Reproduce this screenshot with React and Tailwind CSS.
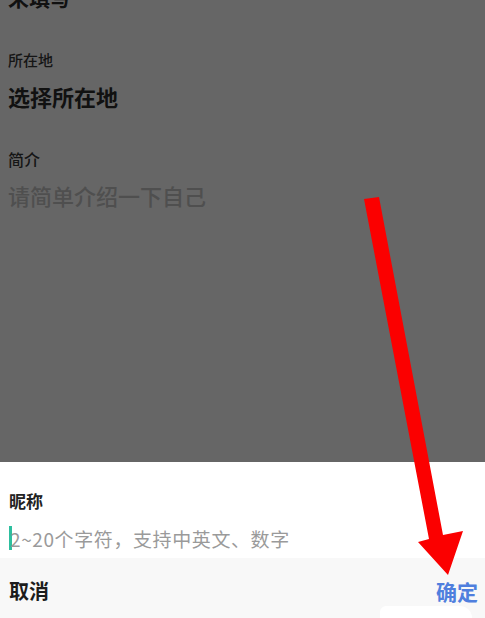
const font = { fontFamily: '"Noto Sans CJK SC", "Noto Sans", sans-serif' };

// Red pointer drawn over the dialog
const Arrow = () => (
  <svg className="pointer-events-none absolute left-0 top-0" width="485" height="618" viewBox="0 0 485 618">
    <polygon
      points="364,199 379,197 443,535 463,531 448,575 418,542 429,539"
      fill="#fb0000"
    />
  </svg>
);

export default function App() {
  return (
    <div className="relative h-[618px] w-[485px] overflow-hidden bg-white" style={font}>
      {/* Dimmed profile form behind the sheet */}
      <div className="flex h-[462px] flex-col bg-[#666666] pl-2">
        <p className="mt-[-13px] text-[21px] font-bold leading-none text-[#111]">未填写</p>
        <p className="mt-[44px] text-[15px] font-medium leading-none text-[#151515]">所在地</p>
        <p className="mt-[18px] text-[22px] font-bold leading-none text-[#111]">选择所在地</p>
        <p className="mt-[44px] text-[16px] font-medium leading-none text-[#151515]">简介</p>
        <p className="mt-[17px] text-[22px] font-medium leading-none text-[#4f4f4f]">请简单介绍一下自己</p>
      </div>

      {/* Nickname editor sheet */}
      <div className="flex h-[96px] flex-col bg-white pl-[9px] pt-[30px]">
        <p className="text-[17px] font-bold leading-none text-[#222]">昵称</p>
        <div className="mt-[17px] flex items-center">
          <span className="mr-[-2px] h-[24px] w-[3px] bg-[#2dbf9f]" />
          <span className="text-[19px] leading-none tracking-[0.6px] text-[#9a9a9a]">2~20个字符，支持中英文、数字</span>
        </div>
      </div>
      <div className="flex h-[60px] items-start justify-between bg-[#f8f8f8] pl-[9px] pr-[7px] pt-[23px]">
        <span className="text-[20px] font-bold leading-none text-[#1c1c1c]">取消</span>
        <span className="relative z-10 text-[21px] font-bold leading-none text-[#4f7fde]">确定</span>
      </div>
      <div className="absolute bottom-0 left-[380px] h-[12px] w-[92px] rounded-tl-md rounded-tr-xl bg-white" />

      <Arrow />
    </div>
  );
}
